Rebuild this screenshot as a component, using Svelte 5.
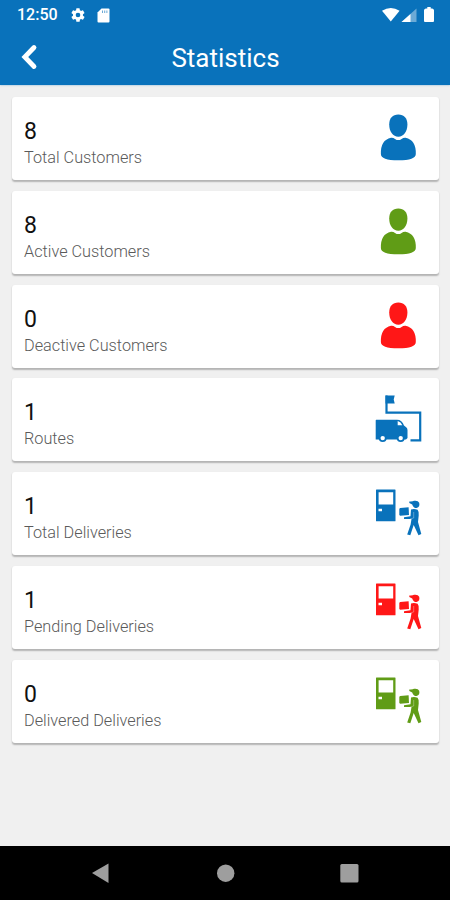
<script>
    const BLUE = '#0972bb';
    const GREEN = '#609c16';
    const RED = '#ff1717';

    const stats = [
        { value: 8, label: 'Total Customers', icon: 'person', color: BLUE },
        { value: 8, label: 'Active Customers', icon: 'person', color: GREEN },
        { value: 0, label: 'Deactive Customers', icon: 'person', color: RED },
        { value: 1, label: 'Routes', icon: 'route', color: BLUE },
        { value: 1, label: 'Total Deliveries', icon: 'delivery', color: BLUE },
        { value: 1, label: 'Pending Deliveries', icon: 'delivery', color: RED },
        { value: 0, label: 'Delivered Deliveries', icon: 'delivery', color: GREEN }
    ];
</script>

<div class="screen">
    <header>
        <div class="status">
            <span class="time">12:50</span>
            <svg class="gear" width="16" height="16" viewBox="0 0 24 24">
                <path fill="#fff" fill-rule="evenodd" d="M19.4 13a7.500 7.500 0 0 0 0-2l2.100-1.650a.5.5 0 0 0 .12-.64l-2-3.460a.5.5 0 0 0-.6-.22l-2.500 1a7.300 7.300 0 0 0-1.700-1l-.37-2.650A.5.5 0 0 0 14 2h-4a.5.5 0 0 0-.5.400L9.130 5a7.700 7.700 0 0 0-1.700 1l-2.500-1a.5.5 0 0 0-.6.220l-2 3.460a.5.5 0 0 0 .12.640L4.560 11a8 8 0 0 0 0 2l-2.110 1.650a.5.5 0 0 0-.12.640l2 3.460c.12.220.39.300.6.220l2.500-1c.52.400 1.080.730 1.700 1l.37 2.600c.04.250.25.430.5.430h4c.25 0 .46-.18.5-.43l.37-2.600a7.300 7.300 0 0 0 1.700-1l2.500 1c.22.080.48 0 .6-.22l2-3.460a.5.5 0 0 0-.12-.64zM12 15.500a3.500 3.500 0 1 1 0-7 3.500 3.500 0 0 1 0 7z" />
            </svg>
            <svg class="sd" width="13" height="15" viewBox="0 0 13 15">
                <path fill="#fff" d="M4.500 0.500H11.500Q12.500 .5 12.500 1.500V13.500Q12.500 14.500 11.500 14.500H1.500Q.5 14.500 .5 13.500V4.500Z" />
                <path stroke="#0972bb" stroke-width="1" d="M5.500 2.500v2.500M7.700 2.500v2.500M9.900 2.500v2.500" opacity=".6" />
            </svg>
            <svg class="signals" width="54" height="18" viewBox="0 0 54 18">
                <path fill="#fff" d="M1 3.700Q9.800 -1.900 18.600 3.700L9.800 14.500Z" />
                <path fill="#fff" opacity=".4" d="M20.500 15L35.500 1.500V15Z" />
                <path fill="#fff" d="M20.500 15L29.500 6.900V15Z" />
                <path fill="#fff" d="M46.300 0h3.400v1.500h1.500q1.800 .5 1.800 1.800v10.700q0 1-1 1h-8q-1 0-1-1V3.300q0-1.300 1.800-1.800h1.500z" />
            </svg>
        </div>
        <div class="title-bar">
            <svg class="back" width="18" height="26" viewBox="0 0 18 26">
                <path d="M14 3.500L4.800 13L14 22.500" fill="none" stroke="#fff" stroke-width="4.800" stroke-linecap="round" />
            </svg>
            <h1>Statistics</h1>
        </div>
    </header>

    <main>
        {#each stats as stat}
            <section class="card">
                <div class="text">
                    <div class="value">{stat.value}</div>
                    <div class="label">{stat.label}</div>
                </div>
                <svg class="icon" viewBox="0 0 56 56" style="color: {stat.color}">
                    {#if stat.icon === 'person'}
                        <path fill="currentColor" d="M28.300 4.500C34 4.500 37.400 8.300 37.400 14.500C37.400 21.700 33.500 26.700 28.300 26.700S19.200 21.700 19.200 14.500C19.200 8.300 22.600 4.500 28.300 4.500Z" />
                        <path fill="currentColor" d="M21 27.700Q23.300 27.500 25 28.900Q28.300 31.300 31.600 28.900Q33.300 27.500 35.600 27.700Q46.200 30 45.800 44Q45.800 50.300 28.300 50.300T10.900 44Q10.400 30 21 27.700Z" />
                    {:else if stat.icon === 'route'}
                        <path fill="none" stroke="currentColor" stroke-width="2.200" d="M16.500 4.500V21.700H50.200V49.300H40.500" />
                        <path fill="currentColor" d="M15.500 4.500h9.200l-1 4 1 4h-9.200z" />
                        <path fill="currentColor" d="M6.200 28.800H27Q32 28.800 34 34.500L36.200 36.300Q37.500 37.300 37.500 39V47L36 48.500H5.700V29.300Z" />
                        <path fill="#fff" d="M27.700 30Q31 31 32.300 34.300H27.700Z" />
                        <circle cx="12.700" cy="47.100" r="3.100" fill="#fff" stroke="currentColor" stroke-width="1.800" />
                        <circle cx="30.700" cy="47.100" r="3.100" fill="#fff" stroke="currentColor" stroke-width="1.800" />
                    {:else}
                        <path fill="currentColor" fill-rule="evenodd" d="M6.500 4.500H25q.5 0 .5.500V35.800q0 .5-.5.500H6.500Q6 36.300 6 35.800V5Q6 4.500 6.500 4.500ZM8.600 7.200V19.500H23.200V7.200ZM8.500 23.800V26.300H12V23.800Z" />
                        <path fill="currentColor" d="M30.200 23L38.600 22.300L39 30L30.200 30.800L29.300 30V23.700Z" />
                        <path fill="currentColor" d="M39.300 16.500Q42.800 16.800 44 15.800Q48 15.200 49.200 17.700Q50.200 21.900 46.600 23Q43.300 23 42.200 19.400L39.300 18Z" />
                        <path fill="currentColor" d="M41 24.600Q44 23.400 47.600 24.800Q49 26.400 48.700 30.400L48 36.900L51.300 48.900L48.500 50.300L43.700 40L40.300 50.300L37.200 49.600L40.600 39.400L41.500 34H34V32.200L40.500 31.200Z" />
                        <path stroke="#fff" stroke-width=".7" fill="none" d="M43.700 27V33L40 34" opacity=".45" />
                    {/if}
                </svg>
            </section>
        {/each}
    </main>

    <nav>
        <svg width="450" height="54" viewBox="0 0 450 54">
            <path fill="#9e9e9e" d="M92 27L108.500 17.500V37Z" />
            <circle cx="225.700" cy="27.200" r="8.700" fill="#9e9e9e" />
            <rect x="340.300" y="18" width="18.200" height="18.500" rx="1.500" fill="#9e9e9e" />
        </svg>
    </nav>
</div>

<style>
    :global(body) {
        background: #f0f0f0;
    }

    .screen {
        width: 450px;
        height: 900px;
        display: flex;
        flex-direction: column;
        background: #f0f0f0;
        font-family: Roboto, sans-serif;
        overflow: hidden;
    }

    header {
        height: 85px;
        flex-shrink: 0;
        background: #0972bb;
        color: #fff;
        box-shadow: 0 0 2px rgba(9, 114, 187, 0.5);
    }

    .status {
        display: flex;
        align-items: center;
        height: 30px;
        padding: 0 15px 0 17px;
    }

    .time {
        width: 41px;
        font-size: 16px;
        font-weight: 500;
        line-height: 30px;
    }

    .gear {
        margin-left: 12px;
    }

    .sd {
        margin-left: 11px;
    }

    .signals {
        margin-left: auto;
        margin-top: 1px;
    }

    .title-bar {
        display: grid;
        grid-template-columns: 60px 1fr 60px;
        align-items: center;
        height: 54px;
    }

    .back {
        margin-left: 20px;
    }

    h1 {
        margin: 0;
        padding: 2px 0 0 1px;
        font-size: 26px;
        font-weight: 400;
        line-height: 52px;
        text-align: center;
    }

    main {
        flex: 1;
        display: flex;
        flex-direction: column;
        gap: 10.8px;
        padding: 12px 11px 0 12px;
    }

    .card {
        display: flex;
        justify-content: space-between;
        height: 83px;
        padding: 0 13px 0 12px;
        box-sizing: border-box;
        background: #fff;
        border-radius: 3px;
        box-shadow: 0 1.5px 1.5px rgba(0, 0, 0, 0.25);
    }

    .text {
        padding-top: 21px;
    }

    .value {
        color: #111;
        font-size: 23px;
        line-height: 28px;
    }

    .label {
        color: #5a5a5a;
        font-size: 16.25px;
        font-weight: 300;
        line-height: 23px;
    }

    .icon {
        width: 56px;
        height: 56px;
        margin-top: 13px;
    }

    nav {
        height: 54px;
        flex-shrink: 0;
        background: #000;
    }

    nav svg {
        display: block;
    }
</style>
